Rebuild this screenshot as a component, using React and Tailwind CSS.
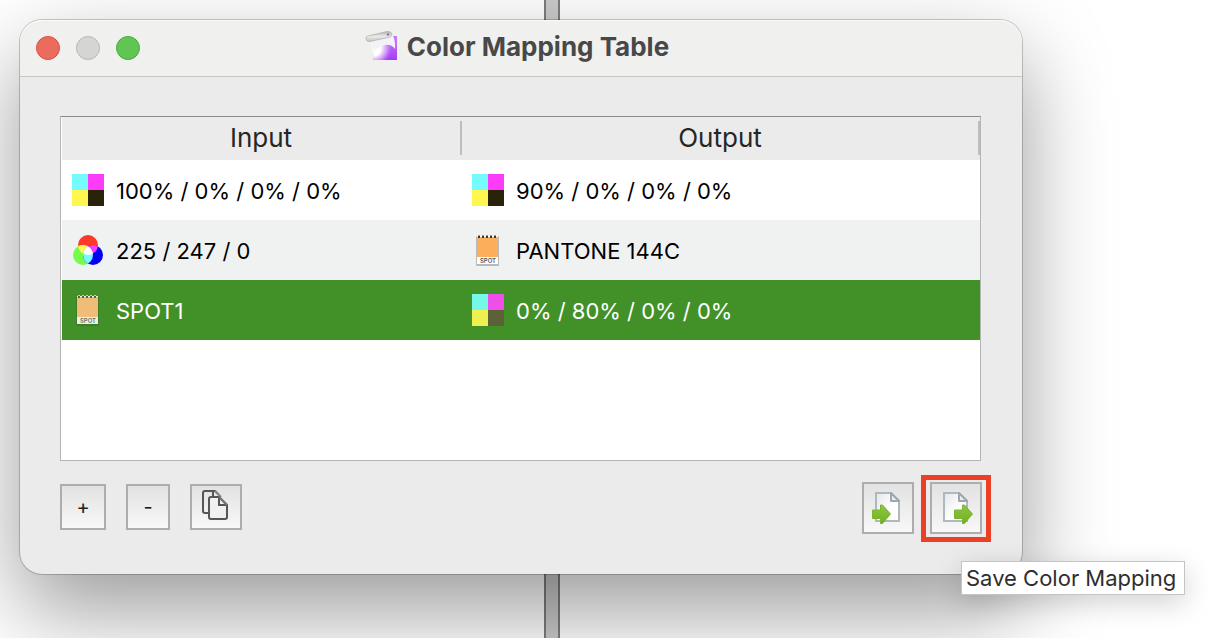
import React, { useId, useState } from "react";

const ROWS = [
  {
    input: { type: "cmyk", label: "100% / 0% / 0% / 0%" },
    output: { type: "cmyk", label: "90% / 0% / 0% / 0%" },
  },
  {
    input: { type: "rgb", label: "225 / 247 / 0" },
    output: { type: "spot", label: "PANTONE 144C" },
  },
  {
    input: { type: "spot", label: "SPOT1" },
    output: { type: "cmyk", label: "0% / 80% / 0% / 0%" },
  },
];

function CmykIcon({ selected }) {
  const [c, m, y, k] = selected
    ? ["#75f9e6", "#ee4fe8", "#eef04f", "#5c6137"]
    : ["#75fbfd", "#fc3cfa", "#fef751", "#292409"];
  return (
    <svg width="32" height="32" viewBox="0 0 32 32" aria-hidden="true">
      <rect width="16" height="16" fill={c} />
      <rect x="16" width="16" height="16" fill={m} />
      <rect y="16" width="16" height="16" fill={y} />
      <rect x="16" y="16" width="16" height="16" fill={k} />
    </svg>
  );
}

function RgbIcon() {
  const id = useId();
  return (
    <svg width="32" height="32" viewBox="0 0 32 32" aria-hidden="true">
      <defs>
        <clipPath id={`${id}r`}>
          <circle cx="16" cy="11" r="10" />
        </clipPath>
        <clipPath id={`${id}g`}>
          <circle cx="11" cy="21" r="10" />
        </clipPath>
      </defs>
      <circle cx="16" cy="11" r="10" fill="#fc3a2a" />
      <circle cx="11" cy="21" r="10" fill="#75fb4c" />
      <circle cx="21" cy="21" r="10" fill="#0000f5" />
      <circle cx="11" cy="21" r="10" fill="#fef751" clipPath={`url(#${id}r)`} />
      <circle cx="21" cy="21" r="10" fill="#fc3cfa" clipPath={`url(#${id}r)`} />
      <g clipPath={`url(#${id}g)`}>
        <circle cx="21" cy="21" r="10" fill="#75fbfd" />
        <circle cx="21" cy="21" r="10" fill="#fff" clipPath={`url(#${id}r)`} />
      </g>
    </svg>
  );
}

function SpotIcon({ selected }) {
  const holes = [6, 10, 14, 18, 22];
  return (
    <svg width="32" height="32" viewBox="0 0 32 32" aria-hidden="true">
      <rect x="4" y="2" width="23" height="30" rx="1" fill={selected ? "#3b7d28" : "#b9baba"} />
      <rect x="5" y="2" width="21" height="28" fill={selected ? "#eef0e4" : "#fff"} />
      <rect x="5" y="3" width="21" height="20" fill={selected ? "#efbd78" : "#fdae5a"} />
      {holes.map((x) => (
        <g key={x}>
          <rect x={x} y="1" width="2" height="1" fill={selected ? "#c8cfba" : "#999"} />
          <rect x={x} y="2" width="2" height="2" fill={selected ? "#57613d" : "#3d3425"} />
        </g>
      ))}
      <text
        x="16"
        y="29"
        textAnchor="middle"
        fontFamily="Inter, sans-serif"
        fontSize="6"
        fontWeight="600"
        fill={selected ? "#6b7560" : "#555"}
      >
        SPOT
      </text>
    </svg>
  );
}

function ColorIcon({ type, selected }) {
  if (type === "cmyk") return <CmykIcon selected={selected} />;
  if (type === "rgb") return <RgbIcon />;
  return <SpotIcon selected={selected} />;
}

function AppIcon() {
  const id = useId();
  return (
    <svg width="34" height="32" viewBox="0 0 34 32" aria-hidden="true">
      <defs>
        <linearGradient id={`${id}p`} x1="0" y1="0" x2="0" y2="1">
          <stop offset="0" stopColor="#c583f7" />
          <stop offset="1" stopColor="#a63cf5" />
        </linearGradient>
        <radialGradient id={`${id}w`} gradientUnits="userSpaceOnUse" cx="8" cy="17" r="20">
          <stop offset="0.4" stopColor="#fff" />
          <stop offset="0.7" stopColor="#dcb0fa" stopOpacity="0.7" />
          <stop offset="1" stopColor="#ab45f7" stopOpacity="0" />
        </radialGradient>
        <linearGradient id={`${id}t`} x1="0" y1="0" x2="0" y2="1">
          <stop offset="0" stopColor="#b4b4b4" />
          <stop offset="0.5" stopColor="#e9e9e9" />
          <stop offset="1" stopColor="#c4c4c4" />
        </linearGradient>
      </defs>
      <rect x="8" y="5" width="24" height="24" fill={`url(#${id}p)`} />
      <path d="M5 9 L27 3 Q31 10 31 17 L32 20 V29 H8 Q9 17 5 9Z" fill={`url(#${id}w)`} />
      <path d="M5 9 L27 3 Q31 10 30 18 Q26 13 20 14 Q14 16 9 20 Q8 14 5 9Z" fill="#f4f2f6" />
      <path
        d="M1 8 Q0 6 3 5 L22 0.5 Q26 0 27 3 Q27 5 25 6 L5 10.5 Q2 11 1 8Z"
        fill={`url(#${id}t)`}
        stroke="#aaa"
        strokeWidth="0.7"
      />
      <circle cx="23" cy="3.5" r="1.3" fill="#858585" />
    </svg>
  );
}

function CopyIcon() {
  return (
    <svg width="28" height="32" viewBox="0 0 28 32" fill="none" stroke="#555" strokeWidth="2" aria-hidden="true">
      <path d="M6 24 H3 Q1 24 1 22 V4 Q1 2 3 2 H13 L17 6" />
      <path d="M11 2 V7" />
      <path d="M13 2 L19 8" stroke="#888" />
      <path d="M7 10 Q7 8 9 8 H17 L25 16 V28 Q25 30 23 30 H9 Q7 30 7 28Z" fill="#f0f0f0" />
      <path d="M17 8 V16 H25" />
      <path d="M17 8 L25 16" stroke="#777" />
    </svg>
  );
}

function PageArrowIcon({ arrowX }) {
  const id = useId();
  return (
    <svg width="36" height="36" viewBox="0 0 36 36" className="overflow-visible" aria-hidden="true">
      <defs>
        <linearGradient id={`${id}page`} x1="0" y1="0" x2="1" y2="1">
          <stop offset="0" stopColor="#e3e7ea" />
          <stop offset="0.6" stopColor="#fff" />
        </linearGradient>
        <linearGradient id={`${id}arrow`} x1="0" y1="0" x2="0" y2="1">
          <stop offset="0" stopColor="#8fc63f" />
          <stop offset="1" stopColor="#72b026" />
        </linearGradient>
      </defs>
      <path
        d="M6 3 H21 L29 11 V31 H6Z"
        fill={`url(#${id}page)`}
        stroke="#b0b8be"
        strokeWidth="2"
      />
      <path d="M21 3 V11 H29Z" fill="#e8eced" stroke="#9fa8ae" strokeWidth="2" strokeLinejoin="round" />
      <g transform={`translate(${arrowX} 14)`}>
        <path
          d="M0.5 6 H8.5 V1 L10.5 1 L18.5 10 L10.5 19.5 H8.5 V14.5 H0.5Z"
          fill={`url(#${id}arrow)`}
          stroke="#7ab52e"
        />
      </g>
    </svg>
  );
}

function ToolButton({ label, className, children }) {
  return (
    <button
      type="button"
      aria-label={label}
      className={`flex items-center justify-center border-2 border-[#adadad] bg-linear-to-b from-[#e2e2e2] to-[#f8f8f8] text-xl text-[#1c1c1c] ${className}`}
    >
      {children}
    </button>
  );
}

function ColorCell({ color, selected }) {
  return (
    <td className="h-[60px] p-0">
      <div className="flex items-center gap-3 pl-2.5">
        <ColorIcon type={color.type} selected={selected} />
        <span className="pt-0.5">{color.label}</span>
      </div>
    </td>
  );
}

function MappingTable() {
  const [selected, setSelected] = useState(2);

  return (
    <div className="mr-px min-h-[345px] border border-[#b4b4b4] border-t-[#8c8c8c] bg-white pl-px">
      <table className="w-full table-fixed border-collapse text-[22px] leading-7">
        <thead>
          <tr className="bg-[#ebebeb] text-[26px] text-[#262626]">
            <th className="h-[43px] w-[400px] p-0 pb-px font-normal">
              <div className="flex h-[34px] items-center justify-center border-r-2 border-[#bdbdbd]">Input</div>
            </th>
            <th className="h-[43px] p-0 pb-px font-normal">
              <div className="flex h-[34px] items-center justify-center border-r-2 border-[#bdbdbd]">Output</div>
            </th>
          </tr>
        </thead>
        <tbody>
          {ROWS.map((row, i) => {
            const active = i === selected;
            const bg = active ? "bg-[#429128] text-white" : i % 2 ? "bg-[#f0f2f2] text-black" : "bg-white text-black";
            return (
              <tr key={i} aria-selected={active} className={bg} onClick={() => setSelected(i)}>
                <ColorCell color={row.input} selected={active} />
                <ColorCell color={row.output} selected={active} />
              </tr>
            );
          })}
        </tbody>
      </table>
    </div>
  );
}

export default function App() {
  return (
    <div className="relative min-h-screen overflow-hidden bg-white py-5 pr-[188px] pl-5 font-['Inter',sans-serif]">
      {/* splitter of the window behind */}
      <div className="absolute inset-y-0 left-[544px] w-4 border-x-2 border-[#7d7d7d] bg-[#cbcbcb]" />

      <main className="relative rounded-[22px] bg-[#ebebeb] pb-10 shadow-[0_0_0_1px_rgba(0,0,0,0.2),0_36px_88px_rgba(0,0,0,0.4)]">
        <header className="flex h-[57px] items-center rounded-t-[22px] border-b border-[#c6c6c6] bg-[#f0f0ee] px-4 shadow-[inset_0_1px_0_#fafafa]">
          <div className="flex flex-1 gap-4">
            <button type="button" aria-label="Close" className="size-6 rounded-full border border-[#d9503f] bg-[#ec6b5f]" />
            <button type="button" aria-label="Minimize" className="size-6 rounded-full border border-[#b8b8b6] bg-[#d5d5d3]" />
            <button type="button" aria-label="Zoom" className="size-6 rounded-full border border-[#4eaa3c] bg-[#61c554]" />
          </div>
          <h1 className="flex items-center gap-2 pb-0.5 text-[26px] leading-8 font-bold text-[#484848]">
            <AppIcon />
            Color Mapping Table
          </h1>
          <div className="flex-1 pl-2" />
        </header>

        <div className="px-10 pt-[39px]">
          <MappingTable />

          <div className="mt-[21px] flex items-center justify-between">
            <div className="flex gap-5 pb-0.5">
              <ToolButton label="Add" className="h-[46px] w-[46px]">
                +
              </ToolButton>
              <ToolButton label="Remove" className="h-[46px] w-11">
                -
              </ToolButton>
              <ToolButton label="Duplicate" className="h-[46px] w-[52px] pb-1">
                <CopyIcon />
              </ToolButton>
            </div>
            <div className="flex gap-4">
              <ToolButton label="Load Color Mapping" className="size-[52px]">
                <PageArrowIcon arrowX={2} />
              </ToolButton>
              <div className="relative">
                <ToolButton label="Save Color Mapping" className="size-[52px]">
                  <PageArrowIcon arrowX={16} />
                </ToolButton>
                <div className="pointer-events-none absolute -inset-x-[9px] -top-[7px] -bottom-2 border-[5px] border-[#eb4025]" />
                <div
                  role="tooltip"
                  className="absolute top-[79px] left-[31px] border border-[#c4c4c4] bg-white pr-2 pl-1 text-[22px] leading-8 whitespace-nowrap text-[#2e2e2e] shadow-[0_8px_28px_rgba(0,0,0,0.18)]"
                >
                  Save Color Mapping
                </div>
              </div>
            </div>
          </div>
        </div>
      </main>
    </div>
  );
}
